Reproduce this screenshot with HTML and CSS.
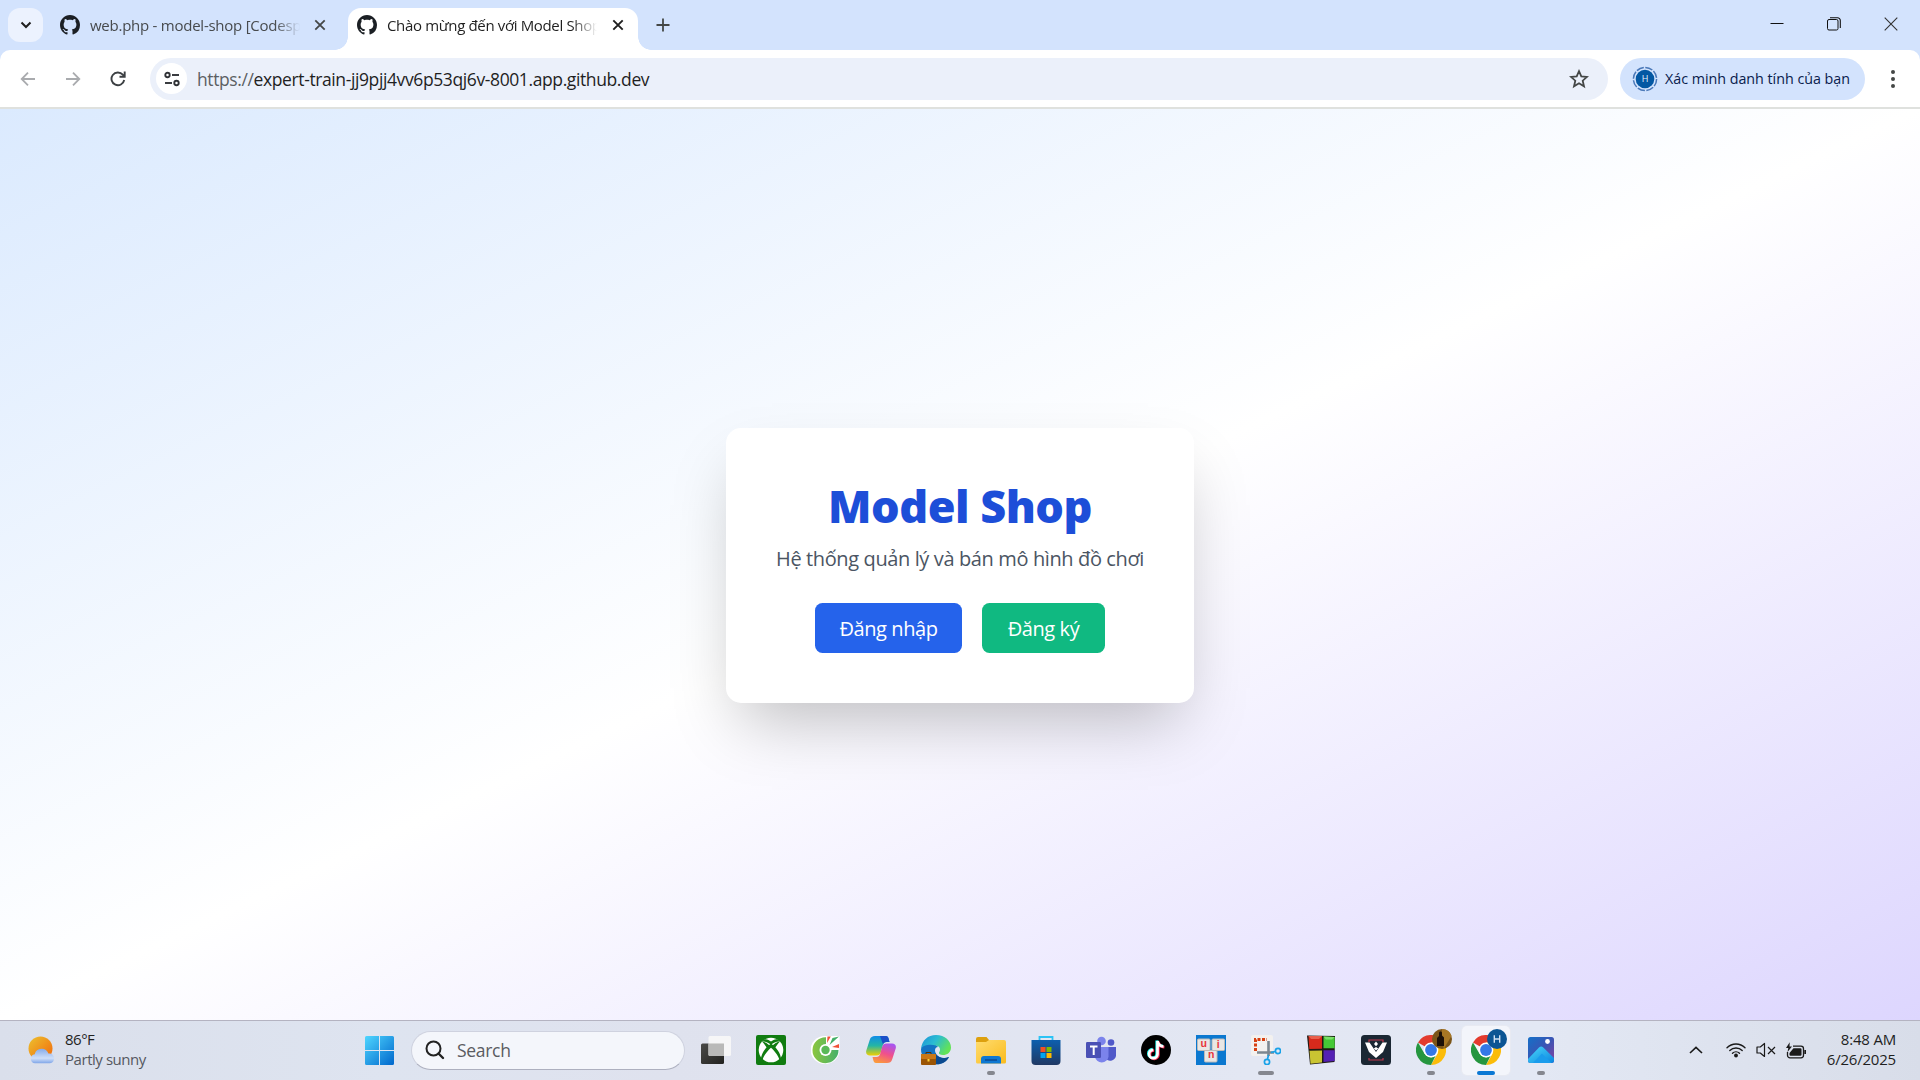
FILE: index.html
```
<!DOCTYPE html>
<html lang="vi">
<head>
<meta charset="utf-8">
<title>Model Shop</title>
<link rel="stylesheet" href="styles.css">
</head>
<body>
<svg class="defs" width="0" height="0" aria-hidden="true">
  <defs>
    <linearGradient id="gWin" x1="0" y1="0" x2="1" y2="1"><stop offset="0" stop-color="#4fd6ff"/><stop offset="1" stop-color="#0067cc"/></linearGradient>
    <linearGradient id="gSun" x1="0" y1="0" x2="1" y2="1"><stop offset="0" stop-color="#ecc22f"/><stop offset="1" stop-color="#f2660a"/></linearGradient>
    <linearGradient id="gCloud" x1="0" y1="0" x2="0" y2="1"><stop offset="0" stop-color="#86abea"/><stop offset=".65" stop-color="#cfdff9"/><stop offset="1" stop-color="#7fa5e8"/></linearGradient>
    <linearGradient id="gDark" x1="0" y1="0" x2="1" y2="1"><stop offset="0" stop-color="#4a4a48"/><stop offset="1" stop-color="#22221f"/></linearGradient>
    <linearGradient id="gCoc" x1="0" y1="0" x2="1" y2="0"><stop offset="0" stop-color="#8cc63f"/><stop offset="1" stop-color="#45b06a"/></linearGradient>
    <linearGradient id="gCopA" x1="0" y1="0" x2="0" y2="1"><stop offset="0" stop-color="#0f8ce8"/><stop offset=".5" stop-color="#25b6a4"/><stop offset="1" stop-color="#f0d000"/></linearGradient>
    <linearGradient id="gCopB" x1=".7" y1="0" x2=".3" y2="1"><stop offset="0" stop-color="#a855f0"/><stop offset=".5" stop-color="#f0508c"/><stop offset="1" stop-color="#fb9a3c"/></linearGradient>
    <linearGradient id="gEdge" x1="0" y1="0" x2="1" y2=".5"><stop offset="0" stop-color="#1b90d8"/><stop offset=".5" stop-color="#2bbcd2"/><stop offset="1" stop-color="#62e258"/></linearGradient>
    <linearGradient id="gFold" x1="0" y1="0" x2="1" y2="1"><stop offset="0" stop-color="#ffdc70"/><stop offset="1" stop-color="#fabb1c"/></linearGradient>
    <linearGradient id="gStore" x1="0" y1="0" x2="0" y2="1"><stop offset="0" stop-color="#0d5fae"/><stop offset="1" stop-color="#203964"/></linearGradient>
    <linearGradient id="gPhoto" x1="0" y1="0" x2="1" y2="1"><stop offset="0" stop-color="#1470c8"/><stop offset=".5" stop-color="#3a55b4"/><stop offset="1" stop-color="#8a3fa0"/></linearGradient>
    <linearGradient id="gMount" x1="0" y1="0" x2="1" y2="1"><stop offset="0" stop-color="#4ad8fa"/><stop offset="1" stop-color="#0a84e0"/></linearGradient>
    <symbol id="github" viewBox="0 0 16 16"><path fill="#1b1f24" d="M8 0C3.58 0 0 3.58 0 8c0 3.54 2.29 6.53 5.47 7.59.4.07.55-.17.55-.38 0-.19-.01-.82-.01-1.49-2.01.37-2.53-.49-2.69-.94-.09-.23-.48-.94-.82-1.13-.28-.15-.68-.52-.01-.53.63-.01 1.08.58 1.23.82.72 1.21 1.87.87 2.33.66.07-.52.28-.87.51-1.07-1.78-.2-3.64-.89-3.64-3.95 0-.87.31-1.59.82-2.15-.08-.2-.36-1.02.08-2.12 0 0 .67-.21 2.2.82.64-.18 1.32-.27 2-.27s1.36.09 2 .27c1.53-1.04 2.2-.82 2.2-.82.44 1.1.16 1.92.08 2.12.51.56.82 1.27.82 2.15 0 3.07-1.87 3.75-3.65 3.95.29.25.54.73.54 1.48 0 1.07-.01 1.93-.01 2.2 0 .21.15.46.55.38A8.01 8.01 0 0 0 16 8c0-4.42-3.58-8-8-8z"/></symbol>
    <symbol id="chrome" viewBox="0 0 30 30">
      <path fill="#e33b2e" d="M15 15 2 7.5A15 15 0 0 1 28 7.5H15z"/>
      <path fill="#fbbc0a" d="M28 7.5A15 15 0 0 1 15 30L21.5 18.75 15 7.5z"/>
      <path fill="#25963f" d="M15 30A15 15 0 0 1 2 7.5L8.5 18.75 15 22.5 19.6 20.8z"/>
      <circle cx="15" cy="15" r="7.4" fill="#fff"/><circle cx="15" cy="15" r="5.9" fill="#3478e6"/>
    </symbol>
  </defs>
</svg>

<div class="screen">
  <header class="tabs">
    <button class="tab-search"><svg width="12" height="12" viewBox="0 0 12 12"><path d="M1.500 3.500 6 8l4.500-4.500" fill="none" stroke="#1f1f1f" stroke-width="2"/></svg></button>
    <div class="tab idle">
      <svg class="favicon"><use href="#github"/></svg>
      <span class="tab-title idle-title">web.php - model-shop [Codesp</span>
      <svg class="close" viewBox="0 0 12 12"><path d="m1.3 1.3 9.4 9.4m0-9.4-9.4 9.4" stroke="#444746" stroke-width="1.8"/></svg>
    </div>
    <div class="tab active">
      <svg class="favicon"><use href="#github"/></svg>
      <span class="tab-title active-title">Chào mừng đến với Model Shop</span>
      <svg class="close" viewBox="0 0 12 12"><path d="m1.3 1.3 9.4 9.4m0-9.4-9.4 9.4" stroke="#1f1f1f" stroke-width="1.9"/></svg>
    </div>
    <svg class="new-tab" width="14" height="14" viewBox="0 0 14 14"><path d="M7 .5v13M.5 7h13" stroke="#444746" stroke-width="1.8"/></svg>
    <div class="window-controls">
      <svg width="14" height="14" viewBox="0 0 14 14"><path d="M.5 6.5h13" stroke="#111" stroke-width="1"/></svg>
      <svg width="14" height="14" viewBox="0 0 14 14"><rect x=".5" y="2.5" width="10.5" height="10.5" rx="1.5" fill="none" stroke="#111"/><path d="M3 .8h7.5a2.7 2.7 0 0 1 2.8 2.8V11" fill="none" stroke="#111" stroke-width="1.1"/></svg>
      <svg width="14" height="14" viewBox="0 0 14 14"><path d="m.7.7 12.6 12.6m0-12.6L.7 13.3" stroke="#333" stroke-width="1.1"/></svg>
    </div>
  </header>

  <div class="toolbar">
    <svg class="nav" viewBox="0 0 16 16"><path d="M15 8H2m6-6.3L1.7 8 8 14.3" fill="none" stroke="#a9abae" stroke-width="1.8"/></svg>
    <svg class="nav" viewBox="0 0 16 16"><path d="M1 8h13M8 1.700 14.300 8 8 14.300" fill="none" stroke="#a9abae" stroke-width="1.800"/></svg>
    <svg class="nav" viewBox="0 0 16 16"><path d="M14.200 9A6.400 6.400 0 1 1 12.800 3.700L14.200 5.200M14.700.5v5.200H9.500" fill="none" stroke="#3c4043" stroke-width="1.900"/></svg>
    <div class="omnibox">
      <span class="site-info"><svg width="18" height="16" viewBox="0 0 18 16"><g fill="none" stroke="#303236" stroke-width="1.900"><circle cx="4.500" cy="4" r="2.200"/><path d="M9 4H16"/><circle cx="13.500" cy="12" r="2.200"/><path d="M2 12H9"/></g></svg></span>
      <span class="url"><span class="scheme">https://</span>expert-train-jj9pjj4vv6p53qj6v-8001.app.github.dev</span>
      <svg class="star" width="20" height="20" viewBox="0 0 20 20"><path d="m10 2.200 2.300 5.200 5.700.5-4.300 3.800 1.300 5.600-5-3-5 3 1.300-5.600L2 7.900l5.700-.5z" fill="none" stroke="#444746" stroke-width="1.800"/></svg>
    </div>
    <div class="profile">
      <svg width="26" height="26" viewBox="0 0 26 26"><circle cx="13" cy="13" r="11.600" fill="none" stroke="#4a78b8" stroke-width="1.500" stroke-dasharray="7.600 1.500"/><circle cx="13" cy="13" r="9.300" fill="#0458a3"/><text x="13" y="16.200" text-anchor="middle" font-size="9" fill="#e8f0fb" font-family="Open Sans, sans-serif">H</text></svg>
      <span class="profile-text">Xác minh danh tính của bạn</span>
    </div>
    <svg class="menu" width="6" height="20" viewBox="0 0 6 20"><g fill="#444746"><circle cx="3" cy="3" r="2"/><circle cx="3" cy="10" r="2"/><circle cx="3" cy="17" r="2"/></g></svg>
  </div>

  <main class="page">
    <section class="card">
      <h1>Model Shop</h1>
      <p>Hệ thống quản lý và bán mô hình đồ chơi</p>
      <div class="actions">
        <a class="btn login">Đăng nhập</a>
        <a class="btn register">Đăng ký</a>
      </div>
    </section>
  </main>

  <footer class="taskbar">
    <div class="weather">
      <svg width="28" height="28" viewBox="0 0 28 28"><circle cx="12.500" cy="12.500" r="12" fill="url(#gSun)"/><path d="M7 27.300a4.600 4.600 0 0 1-.3-9.100 7.200 7.200 0 0 1 13.700-.7h1.600a5 5 0 0 1 0 9.800z" fill="url(#gCloud)"/></svg>
      <div class="two-line"><span class="temp">86°F</span><span class="cond">Partly sunny</span></div>
    </div>
    <div class="center">
      <svg class="start" width="29" height="29" viewBox="0 0 29 29"><path fill="url(#gWin)" d="M1.500 0H14v14H0V1.500A1.500 1.500 0 0 1 1.500 0zM15 0h12.500A1.500 1.500 0 0 1 29 1.500V14H15zM0 15h14v14H1.500A1.500 1.500 0 0 1 0 27.500zM15 15h14v12.500a1.500 1.500 0 0 1-1.500 1.500H15z"/></svg>
      <div class="search"><svg width="20" height="20" viewBox="0 0 20 20"><circle cx="8.500" cy="8.500" r="7" fill="none" stroke="#222" stroke-width="2"/><path d="m13.500 13.500 4.500 4.500" stroke="#222" stroke-width="2.400" stroke-linecap="round"/></svg><span>Search</span></div>
      <div class="apps">
        <div class="app"><svg viewBox="0 0 30 30"><rect x="0" y="8.500" width="23" height="20.500" rx="1.500" fill="url(#gDark)"/><rect x="7.500" y="1" width="22.500" height="20" rx="1.500" fill="#f7f7f7" fill-opacity=".96"/><path d="M7.500 8.500H23V21H9a1.500 1.500 0 0 1-1.500-1.500z" fill="#b9b9b8"/></svg></div>
        <div class="app"><svg viewBox="0 0 30 30"><rect width="30" height="30" rx="2" fill="#107c10"/><circle cx="15" cy="15" r="12.300" fill="#fff"/><g fill="#107c10"><path d="M8 4.500C10.500 3.500 13 5 15 6.500 17 5 19.500 3.500 22 4.500L24 6.500C21 6 17.500 7.500 15 9.800 12.500 7.500 9 6 6 6.500z"/><path d="M15 8.500C20 12 25 18.500 25 24l-1.500 1C22 20 18 15.500 15 12.800 12 15.500 8 20 6.500 25L5 24C5 18.500 10 12 15 8.500z"/><path d="M6 6.500C9 6.500 12 9 14 11l-2.500 3C9.500 10.500 7.500 8 6 6.500zM24 6.500c-3 0-6 2.500-8 4.500l2.500 3C20.500 10.500 22.500 8 24 6.500z"/></g></svg></div>
        <div class="app"><svg viewBox="0 0 30 30"><path fill="#fff" d="M14 1a14.500 14 0 1 0 14.500 14.500V1z"/><path fill="url(#gCoc)" d="M15 2.200A13 13 0 1 0 27.500 15H19L15 11z"/><circle cx="14.500" cy="15" r="6" fill="#fff"/><circle cx="14.500" cy="15" r="4.200" fill="#59b957"/><path d="m16 8 .5-6.500h3.300z" fill="#f05038"/><path d="m18.500 10 3-7 6.500-1.500z" fill="#43b068"/><path d="m21 12 7-3v4z" fill="#f05038"/></svg></div>
        <div class="app"><svg viewBox="0 0 30 30"><path fill="url(#gCopA)" d="M9 1h11c1.500 0 2.200 1 2.600 2.500L23.500 7h-3c-2 0-3 1-3.600 3l-2 7c-.7 2.500-2 3.500-4.500 3.500H4C1 20.500-.5 18.500.3 15.500L3.700 5C4.600 2 6.300 1 9 1z"/><path fill="#1b4fc8" d="M14 1h6c1.500 0 2.200 1 2.600 2.500L23.500 7h-3c-2 0-3 1-3.500 2.500z"/><path fill="url(#gCopB)" d="M21 28H10c-1.500 0-2.200-1-2.600-2.500L6.500 22h4c2 0 3-1 3.600-3l2-7c.7-2.500 2-3.500 4.500-3.500H26c3 0 4.500 2 3.700 5L26.300 24c-.9 3-2.600 4-5.300 4z"/></svg></div>
        <div class="app"><svg viewBox="0 0 30 30"><path fill="#1474c4" d="M0 14C2 7 13 6 17 12c-4 0-4 6 0 9s8 2 11 1c-3 6-10 8-15 7C5 28 0 22 0 14z"/><path fill="url(#gEdge)" d="M0 14C1 5 7 0 15 0c9 0 15 6 15 12.500 0 5-4 7.500-8 7.500-3 0-4.500-1-4-2.500 2-3 1-6-3-7C9 9 2 10 0 14z"/><path fill="#0b4a90" d="M14 18c3 5 9 6 14 4-3 6-9 8-14 7z"/><rect x="0" y="19" width="15" height="11" rx="1" fill="#9b5506"/><rect x="0" y="19" width="15" height="5" rx="1" fill="#c97716"/><path d="M5 19v-1.500h5V19" stroke="#5b2f00" fill="none"/><rect x="6.500" y="24" width="2" height="2.500" fill="#ffd235"/></svg></div>
        <div class="app run"><svg viewBox="0 0 30 30"><path fill="#dda00e" d="M0 4a2 2 0 0 1 2-2h8.500L13 5h15v8H0z"/><path fill="url(#gFold)" d="M0 7h10l3-2h15a2 2 0 0 1 2 2v20a1.500 1.500 0 0 1-1.500 1.500h-27A1.500 1.500 0 0 1 0 27z"/><path fill="#0f78d2" d="M5 28.500V24a3 3 0 0 1 3-3h14a3 3 0 0 1 3 3v4.500z"/><path d="M9 25h12" stroke="#0b3f82" stroke-width="1.200"/></svg></div>
        <div class="app"><svg viewBox="0 0 30 30"><path d="M8.500 6V2h13v4" fill="none" stroke="#2cc3f5" stroke-width="1.800"/><path fill="url(#gStore)" d="M.5 5h29v21a4 4 0 0 1-4 4h-21a4 4 0 0 1-4-4z"/><path fill="#f25022" d="M9.500 12H14.500v5h-5z"/><path fill="#7fba00" d="M15.500 12h5v5h-5z"/><path fill="#00a4ef" d="M9.500 18h5v5h-5z"/><path fill="#ffb900" d="M15.500 18h5v5h-5z"/></svg></div>
        <div class="app"><svg viewBox="0 0 30 30"><circle cx="25" cy="7.500" r="3.300" fill="#5059c9"/><path fill="#5059c9" d="M20 12h10v9a6 6 0 0 1-10 3z"/><circle cx="15.500" cy="6" r="4.300" fill="#7b83eb"/><path fill="#7b83eb" d="M9 12h13.500v9.500a6.800 6.800 0 0 1-13.500 0z"/><rect x="0" y="7" width="15" height="16" rx="1.200" fill="#4a50b5"/><path d="M4 11.500h7.500M7.700 11.500V20" stroke="#fff" stroke-width="2"/></svg></div>
        <div class="app"><svg viewBox="0 0 30 30"><circle cx="15" cy="15" r="15" fill="#000"/><g fill="none" stroke-width="2.700"><path transform="translate(-.8 -.6)" stroke="#25f4ee" d="M16.500 6v13a4.200 4.200 0 1 1-4.200-4.200M16.500 6c.5 3.500 2.500 5.200 6 5.500"/><path transform="translate(.9 .7)" stroke="#fe2c55" d="M16.500 6v13a4.200 4.200 0 1 1-4.200-4.200M16.500 6c.5 3.500 2.500 5.200 6 5.500"/><path stroke="#fff" d="M16.500 6v13a4.200 4.200 0 1 1-4.200-4.200M16.500 6c.5 3.500 2.500 5.200 6 5.500"/></g></svg></div>
        <div class="app"><svg viewBox="0 0 30 30"><rect width="30" height="30" fill="#0b78d0"/><g fill="#e9e7e5" stroke="#bdbab8" stroke-width="1"><rect x="1.500" y="4" width="12.500" height="11.500" rx="1"/><rect x="16" y="4" width="12.500" height="11.500" rx="1"/><rect x="8.500" y="15.500" width="12.500" height="11.500" rx="1"/></g><g font-family="Liberation Sans, sans-serif" font-weight="700" font-size="10.500" fill="#e8353a" text-anchor="middle"><text x="7.800" y="12">u</text><text x="22.300" y="12.500">i</text><text x="15.300" y="22.500">n</text></g></svg></div>
        <div class="app run wide"><svg viewBox="0 0 30 30"><rect x="0" y="0" width="22" height="21" rx="2" fill="#f3f1ef"/><path d="M4.500 16V4.500H16" fill="none" stroke="#d84010" stroke-width="3" stroke-dasharray="3 1.500"/><path d="M17.500 6v15M6 17.500h17" stroke="#7d8790" stroke-width="2.600" fill="none"/><circle cx="16" cy="27" r="2.600" fill="none" stroke="#19a2e8" stroke-width="1.700"/><circle cx="27" cy="16" r="2.600" fill="none" stroke="#19a2e8" stroke-width="1.700"/><path d="m16.500 24 1-4m2.500-2.500 4-1" stroke="#19a2e8" stroke-width="1.700"/></svg></div>
        <div class="app"><svg viewBox="0 0 30 30"><path fill="#1e1a14" d="m1 .5 28 .5-.5 26L4 29.500z"/><path fill="#d62a1c" d="M2.500 1H16V13.700L3.300 14z"/><path fill="#e8604c" d="M2.500 1H16l-3 3H5z"/><path fill="#46c836" d="m17.500 1.500 11.200.5v11.200H17.500z"/><path fill="#7ae068" d="m17.500 1.500 11.200.5-2.700 2.500h-6z"/><path fill="#c9c432" d="m3.500 15.700 12.500-.3V27.500l-11.500 1.200z"/><path fill="#5420b4" d="M17.500 15.200h11.200V26L17.500 27z"/></svg></div>
        <div class="app"><svg viewBox="0 0 30 30"><rect width="30" height="30" rx="3.500" fill="#1b2733"/><path d="M8 7V5h14v2M8 23v2h14v-2" fill="none" stroke="#c0384c" stroke-width="1.200"/><path fill="#fff" d="M4 7.500h4.500L15 17l6.500-9.500H26L22 17l-7 6-7-6z"/><path fill="#fff" d="m15 6.500 2 2.500-2 2.200L13 9zM15 12l2.200 1.500L15 15.500l-2.200-2z"/></svg></div>
        <div class="app run"><svg viewBox="0 0 30 30"><use href="#chrome"/></svg><svg class="badge" viewBox="0 0 20 20"><circle cx="10" cy="10" r="10" fill="#7b5518"/><path d="M10 0a10 10 0 0 1 9.500 7L14 16l-2 4-2-8z" fill="#a77724"/><path d="M7 4c0-2 3-2 3 0v2.500l2 2V17H5V9l2-2z" fill="#1c1108"/></svg></div>
        <div class="app run current"><svg viewBox="0 0 30 30"><use href="#chrome"/></svg><svg class="badge" viewBox="0 0 20 20"><circle cx="10" cy="10" r="10" fill="#0b5594"/><path d="M7.300 6.300v7.500m5.400-7.500v7.500M7.300 10h5.400" stroke="#cfe0f2" stroke-width="1.400"/></svg></div>
        <div class="app run"><svg viewBox="0 0 30 30"><rect x="2" y="2" width="26" height="26" rx="2.500" fill="url(#gPhoto)"/><path fill="url(#gMount)" d="M2 24 13 12.500a3 3 0 0 1 4.300 0L28 23v2.500a2.500 2.500 0 0 1-2.500 2.500h-21A2.500 2.500 0 0 1 2 25.500z"/><path d="m7 28 9-9.500 9.500 9.500z" fill="#1a9cec"/><circle cx="21.500" cy="6.500" r="2.400" fill="#fff"/></svg></div>
      </div>
    </div>
    <div class="tray">
      <svg class="chev" width="14" height="8" viewBox="0 0 14 8"><path d="m1 7 6-5.700L13 7" fill="none" stroke="#1a1a1a" stroke-width="1.600"/></svg>
      <svg class="wifi" width="20" height="16" viewBox="0 0 20 16"><g fill="none" stroke="#1a1a1a" stroke-width="1.400" stroke-linecap="round"><path d="M1 5.800a12.700 12.700 0 0 1 18 0"/><path d="M3.800 8.600a8.800 8.800 0 0 1 12.400 0"/><path d="M6.500 11.300a5 5 0 0 1 7 0"/></g><circle cx="10" cy="13.500" r="1.900" fill="#1a1a1a"/></svg>
      <svg class="vol" width="20" height="16" viewBox="0 0 20 16"><path d="M8.500 1.500v13L4.300 11H1V5h3.300z" fill="none" stroke="#1a1a1a" stroke-width="1.200" stroke-linejoin="round"/><path d="m12 5 7 7m0-7-7 7" stroke="#1a1a1a" stroke-width="1.200"/></svg>
      <svg class="bat" width="21" height="17" viewBox="0 0 21 17"><path d="M7 4.200h8a2.500 2.500 0 0 1 2.500 2.500v6.600a2.500 2.500 0 0 1-2.500 2.500H4a2.500 2.500 0 0 1-2.500-2.500V10" fill="none" stroke="#1a1a1a" stroke-width="1.300"/><path d="M7.500 6.300h7a1 1 0 0 1 1 1v5.500a1 1 0 0 1-1 1H4.500a1 1 0 0 1-1-1V11zM18.300 8H20v4h-1.700zM3.700.3 0 6h2.300L1.500 10 6 4.500H3.500z" fill="#1a1a1a"/></svg>
      <div class="two-line clock"><span class="time">8:48 AM</span><span class="date">6/26/2025</span></div>
    </div>
  </footer>
</div>
</body>
</html>
```
FILE: styles.css
```
* { box-sizing: border-box; }
body { margin: 0; font-family: "Open Sans", "Noto Sans", sans-serif; color: #1f1f1f; overflow: hidden; }
svg { display: block; flex: none; }
.defs { position: absolute; }
.screen { width: 1920px; height: 1080px; display: flex; flex-direction: column; background: #d3e3fd; }
span, a, h1, p { white-space: nowrap; }

/* Tab strip */
.tabs { height: 50px; flex: none; display: flex; align-items: flex-end; padding-left: 8px; }
.tab-search { width: 35px; height: 34px; margin-bottom: 8px; border: 0; border-radius: 12px; background: #ecf2fe; padding: 0; display: grid; place-items: center; }
.tab { height: 42px; display: flex; align-items: center; padding-bottom: 9px; }
.tab.idle { width: 305px; padding-left: 17px; }
.tab.active { width: 290px; padding-left: 9px; background: #fff; border-radius: 13px 13px 0 0; position: relative; }
.tab.active::before, .tab.active::after { content: ""; position: absolute; bottom: 0; width: 13px; height: 13px; }
.tab.active::before { left: -13px; background: radial-gradient(circle at 0 0, transparent 12.5px, #fff 13px); }
.tab.active::after { right: -13px; background: radial-gradient(circle at 100% 0, transparent 12.5px, #fff 13px); }
.favicon { width: 20px; height: 20px; margin-right: 10px; }
.tab-title { width: 210px; overflow: hidden; font-size: 15px; line-height: 24px; padding-top: 1px; mask-image: linear-gradient(90deg, #000 88%, transparent); }
.idle-title { color: #474a4d; letter-spacing: -.25px; }
.active-title { letter-spacing: -.35px; }
.close { width: 12px; height: 12px; margin-left: 14px; }
.active .close { margin-left: 15px; }
.new-tab { margin: 0 0 18px 18px; }
.window-controls { margin: 0 22px 19px auto; display: flex; gap: 43px; }

/* Toolbar */
.toolbar { height: 59px; flex: none; display: flex; align-items: center; background: #fff; border-radius: 10px 10px 0 0; border-bottom: 2px solid #dfe1de; padding-left: 20px; }
.nav { width: 16px; height: 16px; margin-right: 29px; }
.omnibox { width: 1458px; height: 42px; margin-left: -5px; border-radius: 21px; background: #ebf0fa; display: flex; align-items: center; padding: 0 19px 0 6px; }
.site-info { width: 31px; height: 31px; border-radius: 50%; background: #fff; display: grid; place-items: center; }
.url { margin-left: 10px; padding-top: 1px; font-size: 17.5px; letter-spacing: -.39px; }
.scheme { color: #5c5f63; }
.star { margin-left: auto; }
.profile { width: 245px; height: 42px; margin-left: 12px; border-radius: 21px; background: #d3e3fd; display: flex; align-items: center; padding-left: 12px; gap: 7px; color: #09204c; font-size: 14.3px; letter-spacing: -.02px; }
.menu { margin-left: 25px; }

/* Web page */
.page { height: 911px; flex: none; display: flex; justify-content: center; align-items: center; background: linear-gradient(to bottom right, #dbeafe, #fff, #ddd6fe); }
.card { width: 468px; height: 275px; padding: 50px; margin-top: 2px; border-radius: 15px; background: #fff; box-shadow: 0 31px 62px -15px rgba(0, 0, 0, .25); display: flex; flex-direction: column; align-items: center; }
h1 { margin: 0; font-size: 45px; line-height: 55px; font-weight: 800; letter-spacing: -.5px; color: #1d4ed8; }
p { margin: 11px 0 0; font-size: 20px; line-height: 30px; letter-spacing: -.38px; color: #4b5563; }
.actions { display: flex; gap: 20px; margin-top: 29px; }
.btn { height: 50px; border-radius: 7.5px; display: grid; place-items: center; color: #fff; font-size: 20px; letter-spacing: -.4px; }
.login { width: 147px; background: #2563eb; }
.register { width: 123px; background: #10b981; }

/* Taskbar */
.taskbar { height: 60px; flex: none; border-top: 1px solid #b4b3c1; background: linear-gradient(90deg, #dadfeb, #dee4f0 20%, #dfe2ee 35%, #e3e7f3 65%, #e3e8f4 80%, #d8dde9); display: flex; align-items: center; padding-bottom: 1px; }
.weather { width: 365px; display: flex; align-items: center; gap: 9px; padding-left: 28px; }
.two-line { display: flex; flex-direction: column; font-size: 15px; line-height: 20px; letter-spacing: -.2px; padding-bottom: 3px; }
.temp { letter-spacing: -.5px; }
.cond { color: #55585f; letter-spacing: -.45px; }
.center { display: flex; align-items: center; }
.search { width: 274px; height: 39px; margin: 0 15px 0 17px; border-radius: 20px; background: #f4f6fb; border: 1px solid #cfd2df; border-bottom-color: #adb0bf; display: flex; align-items: center; gap: 12px; padding-left: 13px; font-size: 17.5px; letter-spacing: -.3px; color: #5a5c61; }
.apps { display: flex; gap: 7px; margin-left: -8px; }
.app { width: 48px; height: 49px; display: grid; place-items: center; position: relative; border-radius: 5px; }
.app > svg { width: 30px; height: 30px; }
.app .badge { position: absolute; width: 20px; height: 20px; right: 3px; top: 3px; }
.app.run::after { content: ""; position: absolute; bottom: 0; left: 20px; width: 8px; height: 4px; border-radius: 2px; background: #85878f; }
.app.wide::after { left: 16px; width: 16px; }
.app.current { background: #f3f5fb; box-shadow: 0 0 0 1px #e8eaf2; }
.app.current::after { left: 15px; width: 18px; background: #0b78d4; }
.tray { margin-left: auto; display: flex; align-items: center; padding-right: 24px; }
.wifi { margin-left: 23px; }
.vol { margin-left: 10px; }
.bat { margin-left: 10px; }
.clock { align-items: flex-end; width: 70px; margin-left: 19px; }
```
